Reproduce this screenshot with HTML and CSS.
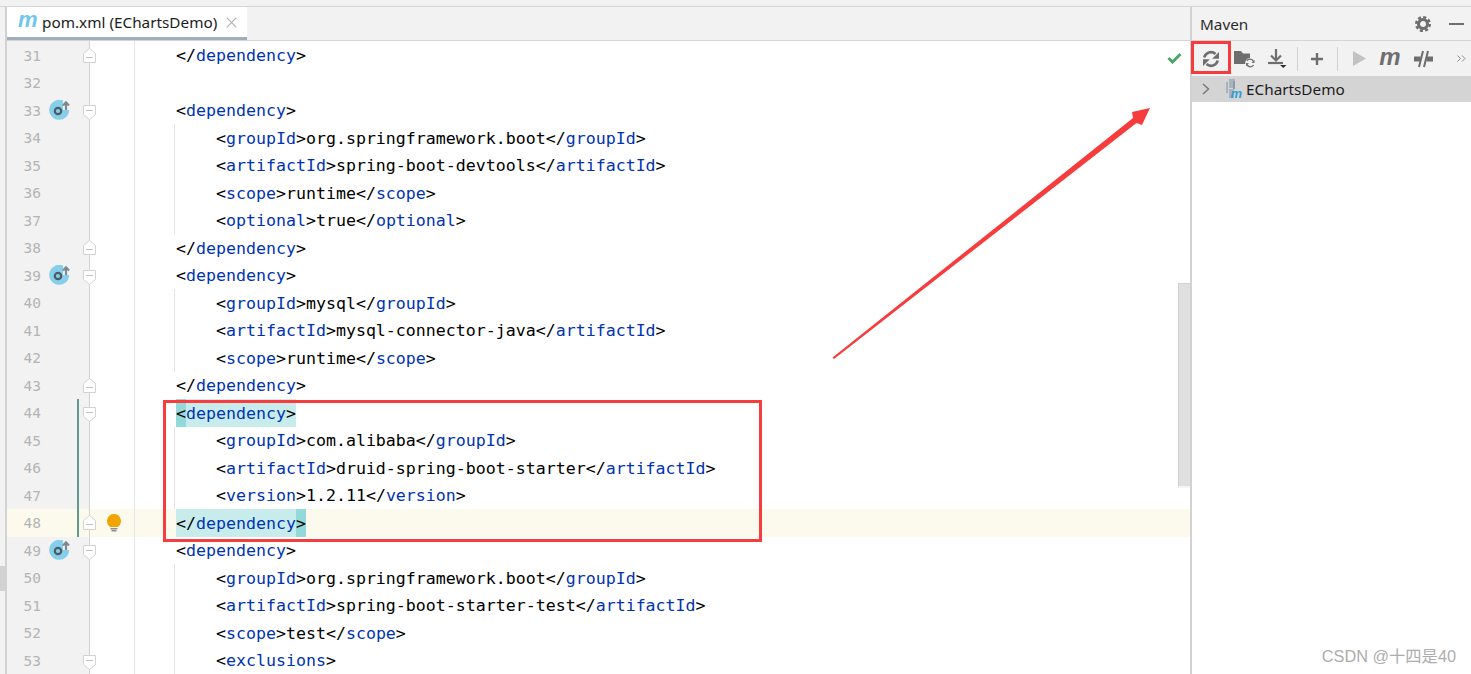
FILE: index.html
```html
<!DOCTYPE html>
<html lang="en">
<head>
<meta charset="utf-8">
<title>pom.xml (EChartsDemo)</title>
<link rel="stylesheet" href="styles.css">
</head>
<body>
<svg class="defs" width="0" height="0" aria-hidden="true">
  <symbol id="fold-down" viewBox="0 0 13 19"><path d="M.5 4.500h12v9l-6 5-6-5z" fill="#fff" stroke="#d2d2d2"/><path d="M3 9.500h7" stroke="#c4c4c4"/></symbol>
  <symbol id="fold-up" viewBox="0 0 13 19"><path d="M.5 16.500h12v-9l-6-5-6 5z" fill="#fff" stroke="#d2d2d2"/><path d="M3 11.500h7" stroke="#c4c4c4"/></symbol>
  <symbol id="override" viewBox="0 0 22 20"><path d="M14 .6A10 10 0 1 0 20.200 10H14z" fill="#85cfeb"/><circle cx="9" cy="11" r="3.200" fill="none" stroke="#4f5b62" stroke-width="2.200"/><path d="M17 10V3.500M14 5.500l3-3.200 3 3.200" fill="none" stroke="#7d8a92" stroke-width="2.200"/></symbol>
</svg>
<div class="app">
  <div class="main">
    <div class="edge"><span class="edge-mark"></span></div>
    <section class="editor">
      <div class="tabs">
        <div class="tab"><span class="m-logo">m</span><span class="tab-name">pom.xml (EChartsDemo)</span>
          <svg class="tab-close" width="11" height="11" viewBox="0 0 11 11"><path d="M.7.7l9.600 9.600M10.300.7L.7 10.300" stroke="#b4b4b4" stroke-width="1.200"/></svg>
        </div>
      </div>
      <div class="lines">
        <div class="row first"><div class="gutter"><span class="num">31</span><span class="ovr"></span><span class="chg"></span><svg class="fold"><use href="#fold-up"/></svg></div><div class="margin"></div><div class="code"><span class="b">&lt;/</span><span class="t">dependency</span><span class="b">&gt;</span></div></div>
        <div class="row"><div class="gutter"><span class="num">32</span><span class="ovr"></span><span class="chg"></span><span class="fold"></span></div><div class="margin"></div><div class="code"></div></div>
        <div class="row"><div class="gutter"><span class="num">33</span><svg class="ovr"><use href="#override"/></svg><span class="chg"></span><svg class="fold"><use href="#fold-down"/></svg></div><div class="margin"></div><div class="code"><span class="b">&lt;</span><span class="t">dependency</span><span class="b">&gt;</span></div></div>
        <div class="row"><div class="gutter"><span class="num">34</span><span class="ovr"></span><span class="chg"></span><span class="fold"></span></div><div class="margin"></div><div class="code"><div class="in"><span class="b">&lt;</span><span class="t">groupId</span><span class="b">&gt;</span>org.springframework.boot<span class="b">&lt;/</span><span class="t">groupId</span><span class="b">&gt;</span></div></div></div>
        <div class="row"><div class="gutter"><span class="num">35</span><span class="ovr"></span><span class="chg"></span><span class="fold"></span></div><div class="margin"></div><div class="code"><div class="in"><span class="b">&lt;</span><span class="t">artifactId</span><span class="b">&gt;</span>spring-boot-devtools<span class="b">&lt;/</span><span class="t">artifactId</span><span class="b">&gt;</span></div></div></div>
        <div class="row"><div class="gutter"><span class="num">36</span><span class="ovr"></span><span class="chg"></span><span class="fold"></span></div><div class="margin"></div><div class="code"><div class="in"><span class="b">&lt;</span><span class="t">scope</span><span class="b">&gt;</span>runtime<span class="b">&lt;/</span><span class="t">scope</span><span class="b">&gt;</span></div></div></div>
        <div class="row"><div class="gutter"><span class="num">37</span><span class="ovr"></span><span class="chg"></span><span class="fold"></span></div><div class="margin"></div><div class="code"><div class="in"><span class="b">&lt;</span><span class="t">optional</span><span class="b">&gt;</span>true<span class="b">&lt;/</span><span class="t">optional</span><span class="b">&gt;</span></div></div></div>
        <div class="row"><div class="gutter"><span class="num">38</span><span class="ovr"></span><span class="chg"></span><svg class="fold"><use href="#fold-up"/></svg></div><div class="margin"></div><div class="code"><span class="b">&lt;/</span><span class="t">dependency</span><span class="b">&gt;</span></div></div>
        <div class="row"><div class="gutter"><span class="num">39</span><svg class="ovr"><use href="#override"/></svg><span class="chg"></span><svg class="fold"><use href="#fold-down"/></svg></div><div class="margin"></div><div class="code"><span class="b">&lt;</span><span class="t">dependency</span><span class="b">&gt;</span></div></div>
        <div class="row"><div class="gutter"><span class="num">40</span><span class="ovr"></span><span class="chg"></span><span class="fold"></span></div><div class="margin"></div><div class="code"><div class="in"><span class="b">&lt;</span><span class="t">groupId</span><span class="b">&gt;</span>mysql<span class="b">&lt;/</span><span class="t">groupId</span><span class="b">&gt;</span></div></div></div>
        <div class="row"><div class="gutter"><span class="num">41</span><span class="ovr"></span><span class="chg"></span><span class="fold"></span></div><div class="margin"></div><div class="code"><div class="in"><span class="b">&lt;</span><span class="t">artifactId</span><span class="b">&gt;</span>mysql-connector-java<span class="b">&lt;/</span><span class="t">artifactId</span><span class="b">&gt;</span></div></div></div>
        <div class="row"><div class="gutter"><span class="num">42</span><span class="ovr"></span><span class="chg"></span><span class="fold"></span></div><div class="margin"></div><div class="code"><div class="in"><span class="b">&lt;</span><span class="t">scope</span><span class="b">&gt;</span>runtime<span class="b">&lt;/</span><span class="t">scope</span><span class="b">&gt;</span></div></div></div>
        <div class="row"><div class="gutter"><span class="num">43</span><span class="ovr"></span><span class="chg"></span><svg class="fold"><use href="#fold-up"/></svg></div><div class="margin"></div><div class="code"><span class="b">&lt;/</span><span class="t">dependency</span><span class="b">&gt;</span></div></div>
        <div class="row"><div class="gutter"><span class="num">44</span><span class="ovr"></span><span class="chg on"></span><svg class="fold"><use href="#fold-down"/></svg></div><div class="margin"></div><div class="code"><span class="pair"><span class="brace">&lt;</span><span class="t">dependency</span><span class="b">&gt;</span></span></div></div>
        <div class="row"><div class="gutter"><span class="num">45</span><span class="ovr"></span><span class="chg on"></span><span class="fold"></span></div><div class="margin"></div><div class="code"><div class="in"><span class="b">&lt;</span><span class="t">groupId</span><span class="b">&gt;</span>com.alibaba<span class="b">&lt;/</span><span class="t">groupId</span><span class="b">&gt;</span></div></div></div>
        <div class="row"><div class="gutter"><span class="num">46</span><span class="ovr"></span><span class="chg on"></span><span class="fold"></span></div><div class="margin"></div><div class="code"><div class="in"><span class="b">&lt;</span><span class="t">artifactId</span><span class="b">&gt;</span>druid-spring-boot-starter<span class="b">&lt;/</span><span class="t">artifactId</span><span class="b">&gt;</span></div></div></div>
        <div class="row"><div class="gutter"><span class="num">47</span><span class="ovr"></span><span class="chg on"></span><span class="fold"></span></div><div class="margin"></div><div class="code"><div class="in"><span class="b">&lt;</span><span class="t">version</span><span class="b">&gt;</span>1.2.11<span class="b">&lt;/</span><span class="t">version</span><span class="b">&gt;</span></div></div></div>
        <div class="row current"><div class="gutter"><span class="num">48</span><span class="ovr"></span><span class="chg on"></span><svg class="fold"><use href="#fold-up"/></svg></div><div class="margin"><svg class="bulb" width="14" height="18" viewBox="0 0 14 18"><path d="M7 0a7 7 0 0 1 4 12.700V13H3v-.3A7 7 0 0 1 7 0z" fill="#f2a500"/><path d="M3.500 14.700h7M4.500 16.800h5" stroke="#8d8d8d" stroke-width="1.400"/></svg></div><div class="code"><span class="pair"><span class="b">&lt;/</span><span class="t">dependency</span><span class="brace">&gt;</span></span></div></div>
        <div class="row"><div class="gutter"><span class="num">49</span><svg class="ovr"><use href="#override"/></svg><span class="chg"></span><svg class="fold"><use href="#fold-down"/></svg></div><div class="margin"></div><div class="code"><span class="b">&lt;</span><span class="t">dependency</span><span class="b">&gt;</span></div></div>
        <div class="row"><div class="gutter"><span class="num">50</span><span class="ovr"></span><span class="chg"></span><span class="fold"></span></div><div class="margin"></div><div class="code"><div class="in"><span class="b">&lt;</span><span class="t">groupId</span><span class="b">&gt;</span>org.springframework.boot<span class="b">&lt;/</span><span class="t">groupId</span><span class="b">&gt;</span></div></div></div>
        <div class="row"><div class="gutter"><span class="num">51</span><span class="ovr"></span><span class="chg"></span><span class="fold"></span></div><div class="margin"></div><div class="code"><div class="in"><span class="b">&lt;</span><span class="t">artifactId</span><span class="b">&gt;</span>spring-boot-starter-test<span class="b">&lt;/</span><span class="t">artifactId</span><span class="b">&gt;</span></div></div></div>
        <div class="row"><div class="gutter"><span class="num">52</span><span class="ovr"></span><span class="chg"></span><span class="fold"></span></div><div class="margin"></div><div class="code"><div class="in"><span class="b">&lt;</span><span class="t">scope</span><span class="b">&gt;</span>test<span class="b">&lt;/</span><span class="t">scope</span><span class="b">&gt;</span></div></div></div>
        <div class="row"><div class="gutter"><span class="num">53</span><span class="ovr"></span><span class="chg"></span><svg class="fold"><use href="#fold-down"/></svg></div><div class="margin"></div><div class="code"><div class="in"><span class="b">&lt;</span><span class="t">exclusions</span><span class="b">&gt;</span></div></div></div>
      </div>
      <svg class="check" width="15" height="12" viewBox="0 0 15 12"><path d="M1.500 6l4 4 8-8" fill="none" stroke="#4ea568" stroke-width="3"/></svg>
      <div class="scrollbar"></div>
    </section>
    <aside class="maven">
      <header class="m-head">
        <span class="m-title">Maven</span>
        <svg class="gear" width="16" height="16" viewBox="0 0 16 16"><circle cx="8" cy="8" r="4.500" fill="none" stroke="#6e6e6e" stroke-width="3"/><circle cx="8" cy="8" r="6.800" fill="none" stroke="#6e6e6e" stroke-width="2.400" stroke-dasharray="3.100 2.240"/></svg>
        <span class="hide-bar"></span>
      </header>
      <div class="toolbar">
        <span class="tool"><svg width="18" height="18" viewBox="0 0 18 18"><path d="M2.300 7.500A6.800 6.800 0 0 1 13.500 4" fill="none" stroke="#6e6e6e" stroke-width="2.600"/><path d="M15.700 10.500A6.800 6.800 0 0 1 4.500 14" fill="none" stroke="#6e6e6e" stroke-width="2.600"/><path d="M17 8.800H10.200L17 2zM1 9.200H7.800L1 16z" fill="#6e6e6e"/></svg></span>
        <span class="tool"><svg width="21" height="18" viewBox="0 0 21 18"><path d="M0 1h7l2 2.500h7V8a5 5 0 0 0-4.800 6H0z" fill="#6e6e6e"/><path d="M19.500 11.500a3.700 3.700 0 0 0-6.600-.5M13 14.500a3.700 3.700 0 0 0 6.600.5" fill="none" stroke="#6e6e6e" stroke-width="1.300"/><path d="M20.500 13V9.800l-3 3zM12 13v3.200l3-3z" fill="#6e6e6e"/></svg></span>
        <span class="tool"><svg width="20" height="19" viewBox="0 0 20 19"><path d="M9 0v10" stroke="#6e6e6e" stroke-width="2.200"/><path d="M4 6.500l5 5 5-5" fill="none" stroke="#6e6e6e" stroke-width="2.200"/><path d="M1 14h15" stroke="#6e6e6e" stroke-width="2.200"/><path d="M13 16h6.500l-3.200 3z" fill="#2e2e2e"/></svg></span>
        <span class="sep"></span>
        <span class="tool"><svg width="14" height="14" viewBox="0 0 14 14"><path d="M7 1v12M1 7h12" stroke="#6e6e6e" stroke-width="2.400"/></svg></span>
        <span class="sep"></span>
        <span class="tool"><svg width="17" height="15" viewBox="0 0 17 15"><path d="M4 0l13 7.500L4 15z" fill="#c2c2c2"/></svg></span>
        <span class="tool"><span class="m-run">m</span></span>
        <span class="tool"><svg width="19" height="18" viewBox="0 0 19 18"><path d="M0 6.500h6.500v5H0zM12.500 6.500H19v5h-6.500z" fill="#6e6e6e"/><path d="M5 17L9 1M10 17L14 1" stroke="#6e6e6e" stroke-width="2"/></svg></span>
        <span class="more"><svg width="9" height="7" viewBox="0 0 9 7"><path d="M.5.5L3.500 3.500.5 6.500M5 .5L8 3.500 5 6.500" fill="none" stroke="#8a8a8a"/></svg></span>
      </div>
      <div class="tree-row">
        <svg class="chev" width="8" height="12" viewBox="0 0 8 12"><path d="M1 1l5.500 5L1 11" fill="none" stroke="#7a7a7a" stroke-width="1.500"/></svg>
        <svg class="module" width="17" height="20" viewBox="0 0 17 20"><path d="M3 0h6v9H3zM0 3h2v11H0zM3 10h5v9H3z" fill="#a8b4bd"/><path d="M7 2h2v8H7z" fill="#8e9ba5"/><text class="module-m" x="4.500" y="19">m</text></svg>
        <span class="tree-name">EChartsDemo</span>
      </div>
    </aside>
  </div>
  <div class="redbox code-box"></div>
  <div class="redbox tool-box"></div>
  <svg class="arrow" width="1471" height="674" viewBox="0 0 1471 674"><path d="M832.500 357.500L1133 118 1132 112 1150 108 1142 125 1136.500 123 834 359z" fill="#f63c3c"/></svg>
  <div class="watermark">CSDN @十四是40</div>
</div>
</body>
</html>
```
FILE: styles.css
```css
* { box-sizing: border-box; }
html, body { margin: 0; padding: 0; background: #f2f2f2; }
.defs { position: absolute; }
.app {
  position: relative;
  width: 1471px;
  height: 674px;
  padding-top: 6px;
  overflow: hidden;
  background: #f2f2f2;
  font-family: "Noto Sans", "Liberation Sans", sans-serif;
}
.main {
  display: flex;
  height: 668px;
  border-top: 1px solid #d4d4d4;
}
.edge {
  position: relative;
  flex: 0 0 7px;
  border-right: 2px solid #d2d2d2;
}
.edge-mark {
  position: absolute;
  left: 0;
  top: 559px;
  width: 5px;
  height: 25px;
  background: #d2d2d2;
}
.editor {
  position: relative;
  flex: 0 0 1183px;
  display: flex;
  flex-direction: column;
  min-width: 0;
  background: #fff;
}
.tabs {
  flex: 0 0 34px;
  display: flex;
  background: #f2f2f2;
  border-bottom: 1px solid #d4d4d4;
}
.tab {
  display: flex;
  align-items: center;
  width: 240px;
  height: 33px;
  padding: 0 0 0 11px;
  background: #fff;
  border-bottom: 3px solid #a0adbf;
}
.m-logo {
  width: 24px;
  font: italic 700 22px/22px "Liberation Sans", sans-serif;
  color: #6fc7ea;
  margin-top: -4px;
}
.tab-name {
  font-size: 15.300px;
  line-height: 20px;
  color: #1c1c1c;
  white-space: nowrap;
}
.tab-close { margin-left: 9px; }
.lines { flex: 1; min-height: 0; overflow: hidden; }
.row {
  display: flex;
  height: 27.5px;
  background: #fff;
}
.row.first { height: 28px; }
.row.first > * { padding-top: .5px; }
.row.current, .row.current .gutter { background: #fcfaed; }
.gutter {
  flex: 0 0 83px;
  min-width: 0;
  display: flex;
  align-items: center;
  background: #f2f2f2;
  border-right: 1px solid #d2d2d2;
}
.num {
  flex: 0 0 34px;
  align-self: flex-start;
  text-align: right;
  font: 14.500px/28.500px "DejaVu Sans Mono", monospace;
  color: #b4b4b4;
}
.ovr {
  flex: 0 0 22px;
  height: 20px;
  margin-left: 8px;
}
.chg {
  flex: 0 0 2px;
  align-self: stretch;
  margin-left: 6px;
}
.chg.on { background: #5f9a8d; }
.fold {
  flex: 0 0 13px;
  height: 19px;
  margin-left: 4px;
}
.margin {
  flex: 0 0 45px;
  display: flex;
  align-items: center;
  padding-left: 17px;
  border-right: 1px solid #e6e6e6;
}
.code {
  flex: 1;
  min-width: 0;
  padding: .5px 0 0 41px;
  font: 16.600px/27.500px "DejaVu Sans Mono", monospace;
  color: #000;
  white-space: pre;
}
.code:has(.pair) { padding-top: 0; }
.t { color: #0033b3; }
.b { color: #000; }
.in {
  margin: -.5px 0 0 -2px;
  height: 27.500px;
  padding: .5px 0 0 41px;
  border-left: 1px solid #e4e4e4;
}
.pair { display: inline-block; height: 27.500px; line-height: 29.500px; background: #c8ecec; }
.brace { display: inline-block; height: 27.500px; background: #93d9d9; }
.check { position: absolute; left: 1160px; top: 45px; }
.scrollbar {
  position: absolute;
  right: 0;
  top: 276px;
  width: 12px;
  height: 205px;
  background: #e0e0e0;
  border: 1px solid #cfcfcf;
  border-right: 0;
  border-bottom: 2px solid #f4f4f4;
}
.maven {
  flex: 1;
  min-width: 0;
  display: flex;
  flex-direction: column;
  background: #fff;
  border-left: 2px solid #d2d2d2;
}
.m-head {
  flex: 0 0 34px;
  display: flex;
  align-items: center;
  padding: 0 7px 0 8px;
  background: #f2f2f2;
  border-bottom: 1px solid #d4d4d4;
}
.m-title { flex: 1; font-size: 15.300px; color: #2b2b2b; }
.gear { margin-right: 18px; }
.hide-bar { width: 15px; height: 2px; background: #6e6e6e; }
.toolbar {
  flex: 0 0 35px;
  display: flex;
  align-items: center;
  padding-left: 2.500px;
  background: #f2f2f2;
}
.tool {
  flex: 0 0 33px;
  display: flex;
  justify-content: center;
  align-items: center;
}
.sep {
  flex: 0 0 1px;
  height: 24px;
  margin: 0 3px;
  background: #d0d0d0;
}
.m-run {
  font: italic 700 24px/24px "Liberation Sans", sans-serif;
  color: #6e6e6e;
  margin-top: -3px;
}
.more { margin-left: auto; margin-right: 5px; display: flex; }
.tree-row {
  flex: 0 0 26px;
  display: flex;
  align-items: center;
  padding-left: 10px;
  background: #d4d4d4;
}
.module { margin-left: 16px; overflow: visible; }
.module-m { font: italic 700 13px "Liberation Sans", sans-serif; fill: #2f9fd8; }
.tree-name { margin-left: 3px; font-size: 15.300px; color: #1c1c1c; }
.redbox { position: absolute; border: 3px solid #f63c3c; }
.code-box { left: 163px; top: 400px; width: 599px; height: 142px; }
.tool-box { left: 1191px; top: 41px; width: 40px; height: 33px; }
.arrow { position: absolute; left: 0; top: 0; pointer-events: none; }
.watermark {
  position: absolute;
  right: 15px;
  top: 645px;
  font: 16.300px/22px "Liberation Sans", "Noto Sans CJK SC", sans-serif;
  color: #adadad;
  white-space: nowrap;
}
```
